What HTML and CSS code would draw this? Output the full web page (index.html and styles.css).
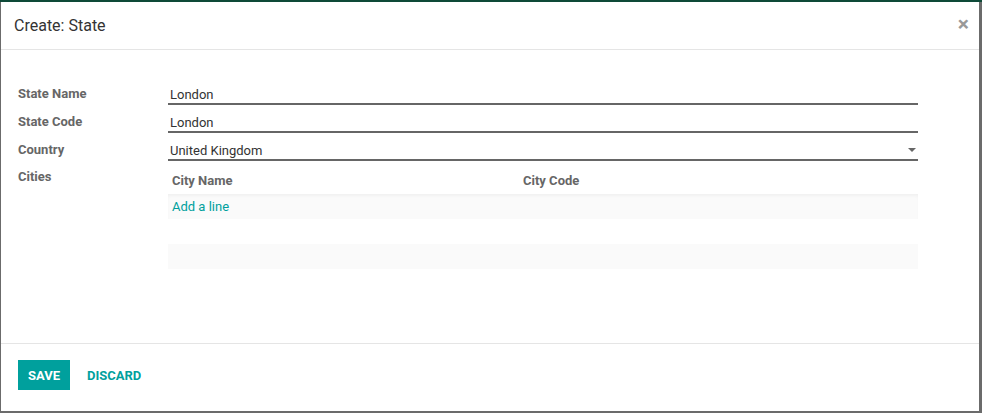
FILE: index.html
```html
<!DOCTYPE html>
<html lang="en">
<head>
    <meta charset="UTF-8">
    <meta name="viewport" content="width=device-width, initial-scale=1.0">
    <title>Create: State</title>
    <link rel="stylesheet" href="styles.css">
</head>
<body>
    <div class="topbar"></div>
    <div class="modal">
        <div class="modal-header">
            <h4>Create: State</h4>
            <span class="close">&times;</span>
        </div>
        <div class="modal-body">
            <div class="form-grid">
                <label>State Name</label>
                <div class="field"><span>London</span></div>
                <label>State Code</label>
                <div class="field"><span>London</span></div>
                <label>Country</label>
                <div class="field select"><span>United Kingdom</span><i class="caret"></i></div>
                <label class="top">Cities</label>
                <div class="cities">
                    <div class="row head">
                        <div>City Name</div>
                        <div>City Code</div>
                    </div>
                    <div class="row add"><a href="#">Add a line</a></div>
                    <div class="row blank"></div>
                    <div class="row blank alt"></div>
                </div>
            </div>
        </div>
        <div class="modal-footer">
            <button class="btn-save">Save</button>
            <button class="btn-link">Discard</button>
        </div>
    </div>
</body>
</html>
```

FILE: styles.css
```css
body {
    margin: 0;
    background: #6b6b6b;
    font-family: Roboto, "Noto Sans", sans-serif;
    font-size: 13px;
    color: #4c4c4c;
}
.topbar {
    height: 2px;
    background: #0e4a38;
}
.modal {
    margin: 0 3px 0 1px;
    height: 409px;
    background: white;
    display: flex;
    flex-direction: column;
}
.modal-header {
    height: 47px;
    border-bottom: 1px solid #e5e5e5;
    display: flex;
    align-items: center;
    justify-content: space-between;
    padding: 0 10px 0 13px;
}
.modal-header h4 {
    margin: 0;
    font-size: 16px;
    font-weight: normal;
    color: #333;
}
.close {
    font-size: 21px;
    font-weight: bold;
    color: #999;
    line-height: 1;
    margin-top: -2px;
}
.modal-body {
    flex: 1;
    padding: 33px 17px 0 17px;
}
.form-grid {
    display: grid;
    grid-template-columns: 150px 750px;
    row-gap: 6px;
}
.form-grid label {
    font-weight: bold;
    color: #666;
    line-height: 22px;
}
.form-grid label.top {
    margin-top: -1px;
}
.field {
    height: 20px;
    padding-top: 2px;
    box-sizing: border-box;
    height: 22px;
    border-bottom: 2px solid #666;
    display: flex;
    align-items: center;
    justify-content: space-between;
    padding-left: 2px;
    color: #333;
}
.caret {
    width: 0;
    height: 0;
    border-left: 4px solid transparent;
    border-right: 4px solid transparent;
    border-top: 4px solid #666;
    margin-right: 2px;
}
.cities {
    margin-top: -1px;
}
.cities .row {
    display: flex;
    align-items: center;
    padding-left: 4px;
}
.cities .head {
    height: 28px;
    font-weight: bold;
    color: #666;
}
.cities .head div:first-child {
    width: 351px;
}
.cities .add {
    height: 25px;
    background: #fafafa;
    box-shadow: inset 0 3px 4px -2px rgba(0, 0, 0, 0.06);
}
.cities .add a {
    color: #00a09d;
    text-decoration: none;
}
.cities .blank {
    height: 25px;
}
.cities .alt {
    background: #fafafa;
}
.modal-footer {
    height: 68px;
    border-top: 1px solid #e5e5e5;
    display: flex;
    align-items: flex-start;
    padding: 16px 17px 0;
    box-sizing: border-box;
}
.modal-footer button {
    font-family: Roboto, sans-serif;
    font-size: 13px;
    font-weight: bold;
    text-transform: uppercase;
    height: 30px;
    border: none;
    cursor: pointer;
}
.btn-save {
    background: #00a09d;
    color: white;
    width: 52px;
    padding: 0;
}
.btn-link {
    background: none;
    color: #00a09d;
    margin-left: 5px;
    padding: 0 12px;
}
```
